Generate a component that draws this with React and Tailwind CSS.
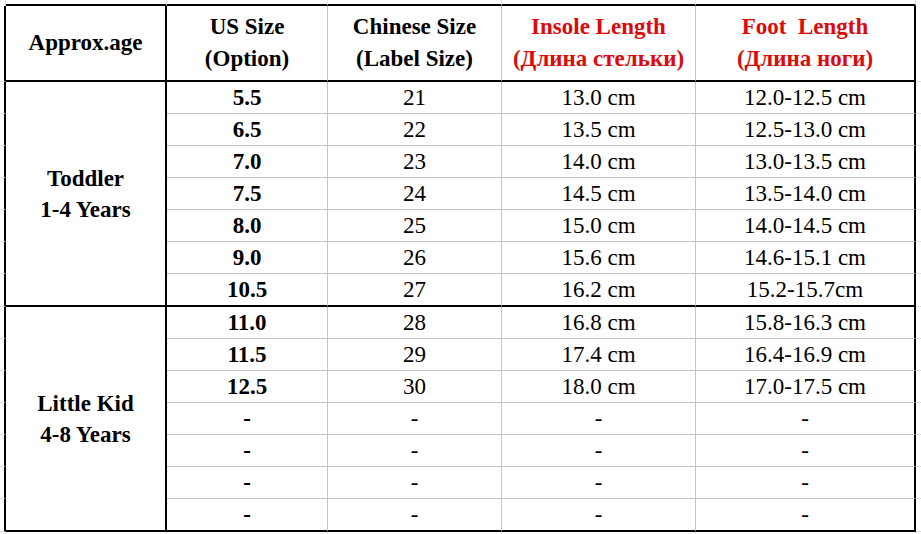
import React from 'react';

const toddler = [
    ['5.5', '21', '13.0 cm', '12.0-12.5 cm'],
    ['6.5', '22', '13.5 cm', '12.5-13.0 cm'],
    ['7.0', '23', '14.0 cm', '13.0-13.5 cm'],
    ['7.5', '24', '14.5 cm', '13.5-14.0 cm'],
    ['8.0', '25', '15.0 cm', '14.0-14.5 cm'],
    ['9.0', '26', '15.6 cm', '14.6-15.1 cm'],
    ['10.5', '27', '16.2 cm', '15.2-15.7cm'],
];

const littleKid = [
    ['11.0', '28', '16.8 cm', '15.8-16.3 cm'],
    ['11.5', '29', '17.4 cm', '16.4-16.9 cm'],
    ['12.5', '30', '18.0 cm', '17.0-17.5 cm'],
    ['-', '-', '-', '-'],
    ['-', '-', '-', '-'],
    ['-', '-', '-', '-'],
    ['-', '-', '-', '-'],
];

// text sits in its own <p> so the serif face is set right on it
const T = ({ children, className = '' }) => (
    <p className={`font-['Liberation_Serif']! ${className}`}>{children}</p>
);

// each cell draws only its right and bottom line, so every line is drawn once
const light = 'border-[#e0e0e0]';
const center = 'flex items-center justify-center text-center';
const grayR = 'border-r border-r-[#c4c4c4]';
const blackR = 'border-r-2 border-r-black';
const grayB = 'border-b border-b-[#c4c4c4]';
const blackB = 'border-b-2 border-b-black';

const Group = ({ label, sub, rows }) => (
    <>
        {rows.map((r, i) => {
            const bottom = i === rows.length - 1 ? blackB : grayB;
            return (
                <React.Fragment key={i}>
                    {/* left excel gridline stub */}
                    <div className="border-r-2 border-r-black border-b border-b-[#e0e0e0]" />
                    {i === 0 && (
                        <div className={`row-span-7 ${center} flex-col font-bold leading-[31px] ${blackR} ${blackB}`}>
                            <T>{label}</T>
                            <T>{sub}</T>
                        </div>
                    )}
                    <div className={`${center} leading-none ${grayR} ${bottom}`}>
                        <T className="font-bold">{r[0]}</T>
                    </div>
                    <div className={`${center} leading-none ${grayR} ${bottom}`}>
                        <T>{r[1]}</T>
                    </div>
                    <div className={`${center} leading-none ${grayR} ${bottom}`}>
                        <T>{r[2]}</T>
                    </div>
                    <div className={`${center} leading-none ${blackR} ${bottom}`}>
                        <T>{r[3]}</T>
                    </div>
                    <div className="border-b border-b-[#e0e0e0]" />
                </React.Fragment>
            );
        })}
    </>
);

export default function App() {
    return (
        <div className="grid h-[534px] w-[921px] overflow-hidden bg-white text-black text-[23px] grid-cols-[6px_161px_161px_174px_194px_220px_1fr] grid-rows-[6px_76px_repeat(6,32px)_33px_repeat(6,32px)_33px_1fr]">
            {/* top stub row */}
            <div className={`border-r ${light}`} />
            <div className="border-r border-r-[#e0e0e0] border-b-2 border-b-black" />
            <div className="border-r border-r-[#e0e0e0] border-b-2 border-b-black" />
            <div className="border-r border-r-[#e0e0e0] border-b-2 border-b-black" />
            <div className="border-r border-r-[#e0e0e0] border-b-2 border-b-black" />
            <div className="border-r border-r-[#e0e0e0] border-b-2 border-b-black" />
            <div />

            {/* Header */}
            <div className="border-r-2 border-r-black border-b border-b-[#e0e0e0]" />
            <div className={`${center} font-bold ${blackR} ${blackB}`}>
                <T>Approx.age</T>
            </div>
            <div className={`${center} flex-col font-bold leading-[32px] ${grayR} ${blackB}`}>
                <T>US Size</T>
                <T>(Option)</T>
            </div>
            <div className={`${center} flex-col font-bold leading-[32px] ${grayR} ${blackB}`}>
                <T>Chinese Size</T>
                <T>(Label Size)</T>
            </div>
            <div className={`${center} flex-col font-bold leading-[32px] text-[#dc0a0a] ${grayR} ${blackB}`}>
                <T>Insole Length</T>
                <T>(Длина стельки)</T>
            </div>
            <div className={`${center} flex-col font-bold leading-[32px] text-[#dc0a0a] ${blackR} ${blackB}`}>
                <T className="whitespace-pre">{'Foot  Length'}</T>
                <T>(Длина ноги)</T>
            </div>
            <div className="border-b border-b-[#e0e0e0]" />

            <Group label="Toddler" sub="1-4 Years" rows={toddler} />
            <Group label="Little Kid" sub="4-8 Years" rows={littleKid} />

            {/* bottom stub row */}
            <div className={`border-r ${light}`} />
            <div className={`border-r ${light}`} />
            <div className={`border-r ${light}`} />
            <div className={`border-r ${light}`} />
            <div className={`border-r ${light}`} />
            <div className={`border-r ${light}`} />
            <div />
        </div>
    );
}
